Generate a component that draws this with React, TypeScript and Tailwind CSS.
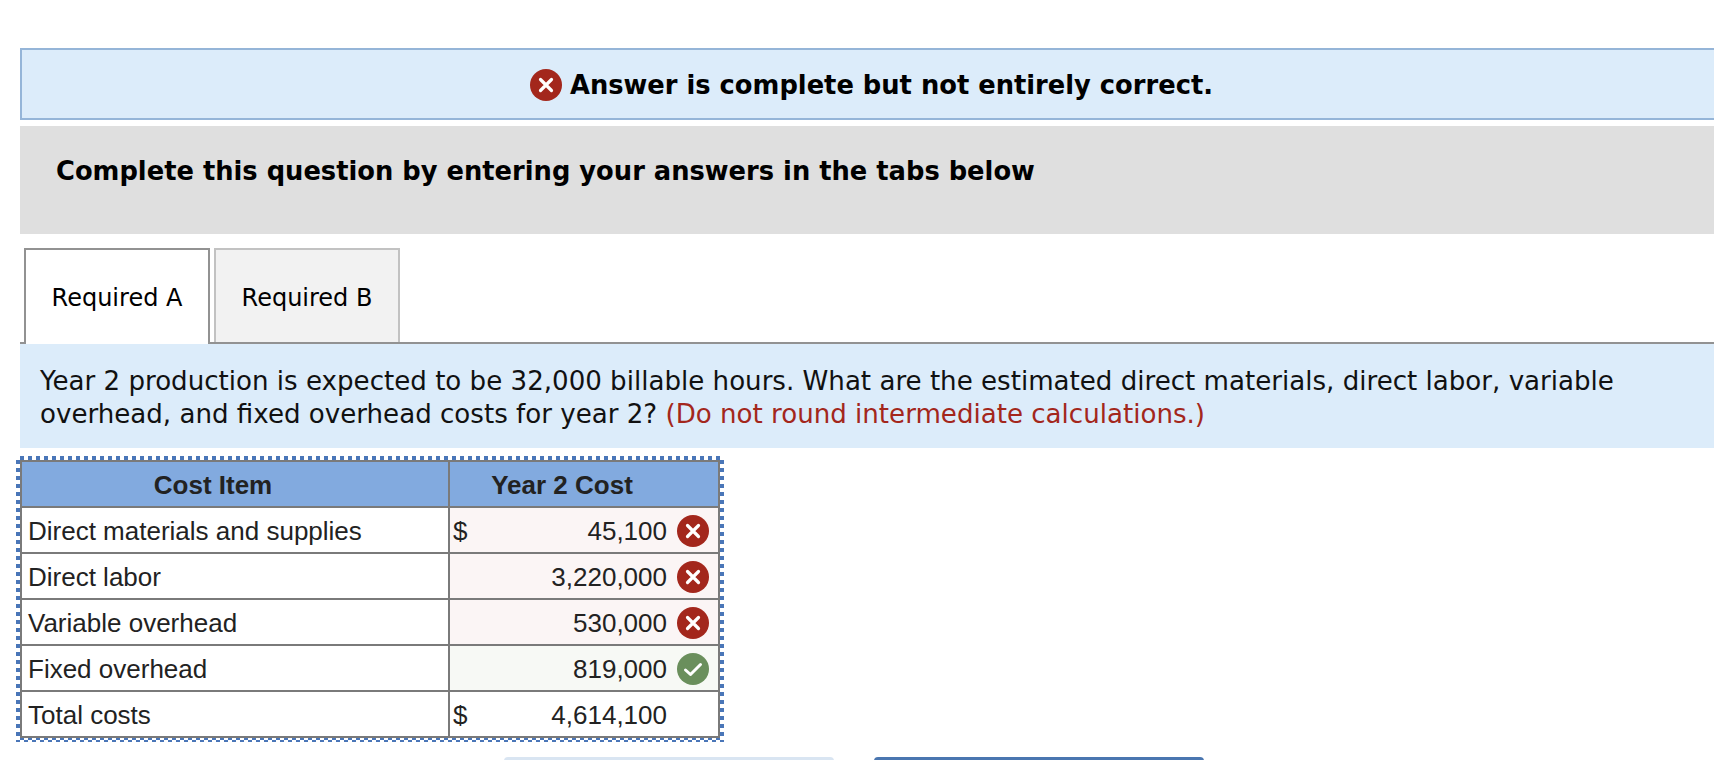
const CELL = 'border-2 border-[#7a7a7a] text-[#222]'

type Mark = 'wrong' | 'right' | null

type Row = {
  item: string
  dollar?: boolean
  amount: string
  mark: Mark
}

const rows: Row[] = [
  { item: 'Direct materials and supplies', dollar: true, amount: '45,100', mark: 'wrong' },
  { item: 'Direct labor', amount: '3,220,000', mark: 'wrong' },
  { item: 'Variable overhead', amount: '530,000', mark: 'wrong' },
  { item: 'Fixed overhead', amount: '819,000', mark: 'right' },
  { item: 'Total costs', dollar: true, amount: '4,614,100', mark: null },
]

function WrongIcon({ className }: { className?: string }) {
  return (
    <svg viewBox="0 0 32 32" className={className} aria-hidden>
      <circle cx="16" cy="16" r="16" fill="#a3271c" />
      <path d="M10.5 10.5 21.5 21.5M21.5 10.5 10.5 21.5" stroke="#fff" strokeWidth="3.2" strokeLinecap="round" />
    </svg>
  )
}

function RightIcon({ className }: { className?: string }) {
  return (
    <svg viewBox="0 0 32 32" className={className} aria-hidden>
      <circle cx="16" cy="16" r="16" fill="#6a8f5c" />
      <path d="M8.5 17 13.5 21.5 23.5 11.5" stroke="#fff" strokeWidth="3" fill="none" strokeLinecap="round" strokeLinejoin="round" />
    </svg>
  )
}

function rowBg(mark: Mark) {
  if (mark === 'wrong') return 'bg-[#fbf5f5]'
  if (mark === 'right') return 'bg-[#f7f9f5]'
  return 'bg-white'
}

export default function App() {
  return (
    <div className="h-[760px] overflow-hidden bg-white pt-[48px] pl-[20px] font-['Liberation_Sans',sans-serif]">
      <div className="flex h-[72px] items-center justify-center gap-[8px] border-y-2 border-l-2 border-[#95b5d8] bg-[#dcecfa] pt-[2px] pl-[7px] font-['DejaVu_Sans',sans-serif] text-[25.75px] font-bold text-black">
        <WrongIcon className="size-[32px]" />
        <span>Answer is complete but not entirely correct.</span>
      </div>

      <div className="mt-[6px] h-[108px] bg-[#dfdfdf] pt-[29px] pl-[36px] font-['DejaVu_Sans',sans-serif] text-[25.75px] leading-[32px] font-bold text-black">
        Complete this question by entering your answers in the tabs below
      </div>

      <div className="mt-[14px] flex h-[96px] gap-[4px] border-b-2 border-[#929292] pl-[4px] font-['DejaVu_Sans',sans-serif] text-[24px] text-black">
        <div className="z-10 flex h-[96px] w-[186px] justify-center border-x-2 border-t-2 border-[#929292] bg-white pt-[32px] leading-[32px]">
          Required A
        </div>
        <div className="flex h-[94px] w-[186px] justify-center border-x-2 border-t-2 border-[#c2c2c2] bg-[#f2f2f2] pt-[32px] leading-[32px]">
          Required B
        </div>
      </div>

      <div className="h-[104px] bg-[#dcecfa] pt-[21px] pl-[20px] font-['DejaVu_Sans',sans-serif] text-[26.1px] leading-[33px] text-[#111]">
        <p>Year 2 production is expected to be 32,000 billable hours. What are the estimated direct materials, direct labor, variable</p>
        <p>
          overhead, and fixed overhead costs for year 2? <span className="text-[#a3271c]">(Do not round intermediate calculations.)</span>
        </p>
      </div>

      <div className="mt-[8px] -ml-[4px] w-[708px] bg-[conic-gradient(#4a76b8_25%,transparent_0_50%,#4a76b8_0_75%,transparent_0)] bg-size-[8px_8px] p-[4px]">
        <table className="w-full table-fixed border-collapse bg-white text-[26px] leading-[30px]">
          <colgroup>
            <col className="w-[428px]" />
            <col />
          </colgroup>
          <thead>
            <tr className="h-[46px] bg-[#82aadf] font-bold">
              <th className={`${CELL} pt-[1px] pr-[44px]`}>Cost Item</th>
              <th className={`${CELL} pt-[1px] pr-[44px]`}>Year 2 Cost</th>
            </tr>
          </thead>
          <tbody>
            {rows.map((row) => (
              <tr key={row.item} className="h-[46px]">
                <td className={`${CELL} px-[6px] pt-[1px]`}>{row.item}</td>
                <td className={`${CELL} pt-[1px] pr-[2px] pl-[3px] ${rowBg(row.mark)}`}>
                  <div className="flex items-center">
                    <span>{row.dollar ? '$' : ''}</span>
                    <span className="ml-auto">{row.amount}</span>
                    <span className="mr-[7px] ml-[10px] size-[32px]">
                      {row.mark === 'wrong' && <WrongIcon className="size-[32px]" />}
                      {row.mark === 'right' && <RightIcon className="size-[32px]" />}
                    </span>
                  </div>
                </td>
              </tr>
            ))}
          </tbody>
        </table>
      </div>

      <div className="mt-[15px] ml-[484px] flex gap-[40px]">
        <div className="h-[40px] w-[330px] rounded-[4px] bg-[#d9e5f2]" />
        <div className="h-[40px] w-[330px] rounded-[4px] bg-[#4a76b0]" />
      </div>
    </div>
  )
}
